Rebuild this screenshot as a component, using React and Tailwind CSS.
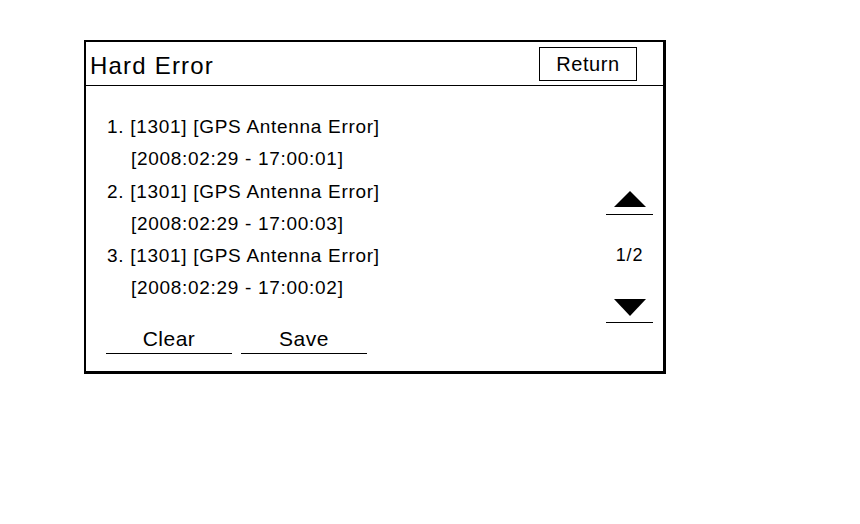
import React from "react";

const errors = [
  { code: "1301", name: "GPS Antenna Error", time: "2008:02:29 - 17:00:01" },
  { code: "1301", name: "GPS Antenna Error", time: "2008:02:29 - 17:00:03" },
  { code: "1301", name: "GPS Antenna Error", time: "2008:02:29 - 17:00:02" },
];

function UpArrow() {
  return (
    <svg width="32" height="16" viewBox="0 0 32 16" className="block mx-auto">
      <polygon points="16,0 32,16 0,16" fill="#000" />
    </svg>
  );
}

function DownArrow() {
  return (
    <svg width="32" height="17" viewBox="0 0 32 17" className="block mx-auto">
      <polygon points="0,0 32,0 16,17" fill="#000" />
    </svg>
  );
}

function App() {
  return (
    <div
      className="w-[860px] h-[524px] bg-white text-black pt-[40px] pl-[84px]"
      style={{ fontFamily: '"Liberation Sans", Arial, sans-serif' }}
    >
      <div className="w-[582px] h-[334px] border-2 border-r-[3px] border-b-[3px] border-black flex flex-col">
        {/* Header */}
        <div className="h-[44px] border-b border-black flex items-center justify-between pl-[4px] pr-[26px]">
          <span className="text-[24px] tracking-[1.2px] leading-none mt-[4px]">Hard Error</span>
          <button className="w-[98px] h-[34px] border border-black flex items-center justify-center text-[20px] tracking-[0.6px] leading-none mt-[1px]">
            Return
          </button>
        </div>

        {/* Body */}
        <div className="flex-1 flex flex-row">
          <div className="flex-1 flex flex-col">
            <div className="pl-[21px] pt-[25px] text-[19px] tracking-[0.7px] leading-[32.3px]">
              {errors.map((e, i) => (
                <div key={i}>
                  <div>
                    {i + 1}. [{e.code}] [{e.name}]
                  </div>
                  <div className="pl-[24px]">[{e.time}]</div>
                </div>
              ))}
            </div>
            <div className="flex flex-row gap-[9px] pl-[20px] mt-[20px]">
              <button className="w-[126px] h-[29px] border-b-[1.5px] border-black text-[21px] tracking-[0.5px] leading-[24px]">
                Clear
              </button>
              <button className="w-[126px] h-[29px] border-b-[1.5px] border-black text-[21px] tracking-[0.5px] leading-[24px]">
                Save
              </button>
            </div>
          </div>

          <div className="w-[47px] mr-[10px] pt-[105px] flex flex-col">
            <button className="w-full border-b-[1.5px] border-black pb-[7px]">
              <UpArrow />
            </button>
            <div className="mt-[30px] text-center text-[18px] tracking-[0.8px] leading-[20px]">1/2</div>
            <button className="w-full border-b-[1.5px] border-black pb-[6px] mt-[34px]">
              <DownArrow />
            </button>
          </div>
        </div>
      </div>
    </div>
  );
}

export default App;
